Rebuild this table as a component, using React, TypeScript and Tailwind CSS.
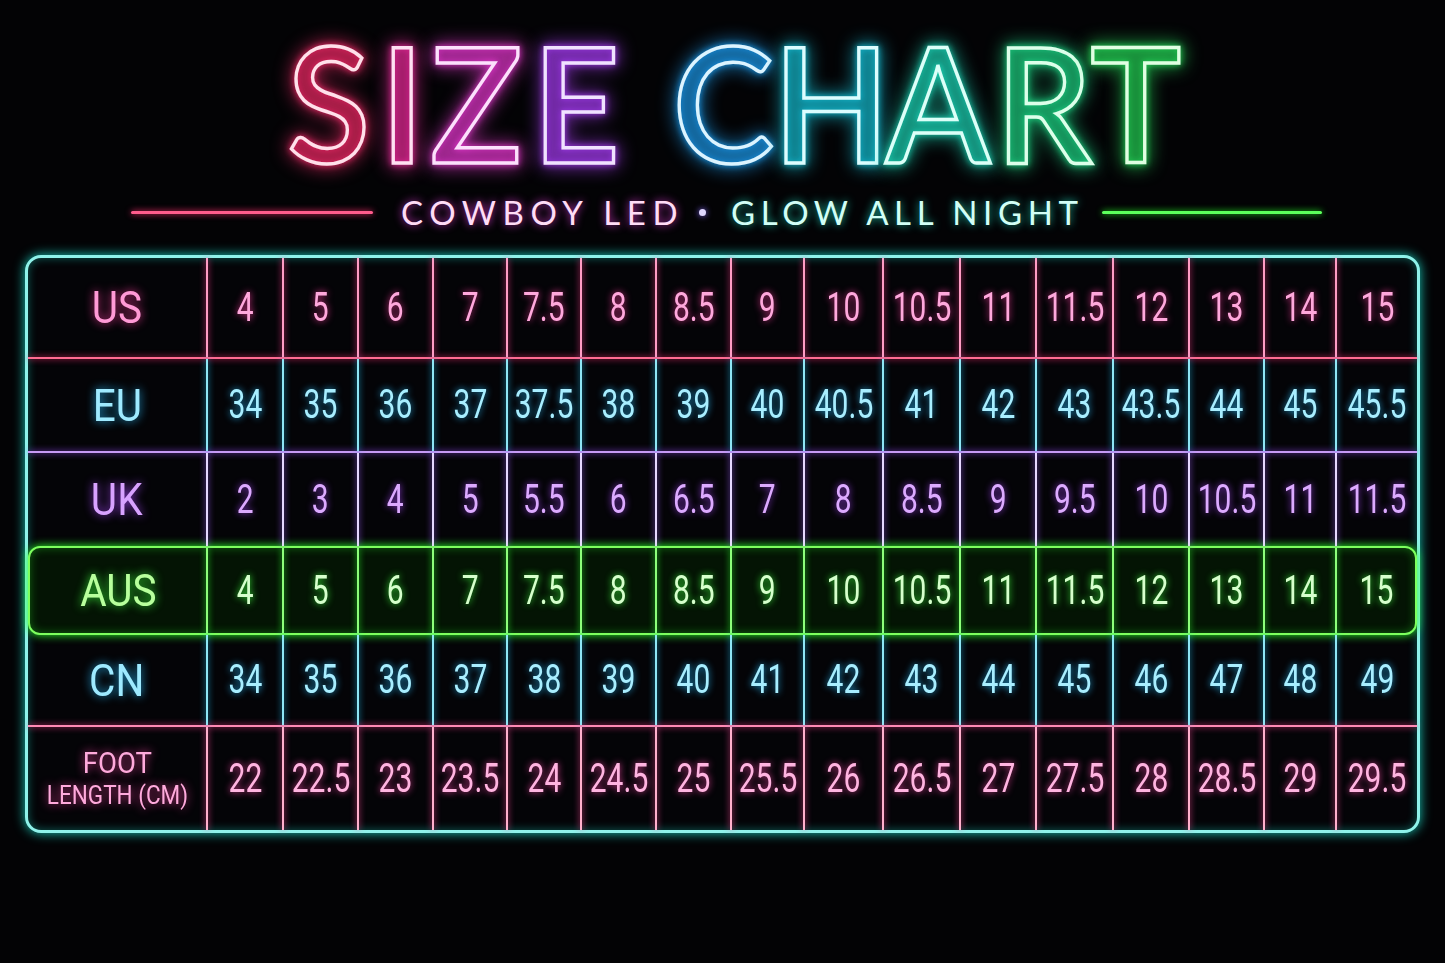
import React from "react";

const COLS = [
  "w-[74px]", "w-[73px]", "w-[73px]", "w-[72px]", "w-[72px]", "w-[73px]", "w-[73px]", "w-[71px]",
  "w-[77px]", "w-[75px]", "w-[74px]", "w-[75px]", "w-[74px]", "w-[73px]", "w-[70px]", "w-[80px]",
];

type RowDef = {
  key: string;
  label: React.ReactNode;
  values: string[];
  text: string;
  labelText: string;
  divider: string;
  height: string;
};

const NUM_FONT = "font-['Roboto','Noto_Sans',sans-serif]";

const rows: RowDef[] = [
  {
    key: "us",
    label: "US",
    values: ["4", "5", "6", "7", "7.5", "8", "8.5", "9", "10", "10.5", "11", "11.5", "12", "13", "14", "15"],
    text: "text-[#ffa8dc] [text-shadow:0_0_8px_rgba(255,60,160,0.85)]",
    labelText: "text-[#ff9ad6] [text-shadow:0_0_10px_rgba(255,60,160,0.9)]",
    divider: "bg-[#ff9cc4] shadow-[0_0_6px_#ff3c8c]",
    height: "h-[99px]",
  },
  {
    key: "eu",
    label: "EU",
    values: ["34", "35", "36", "37", "37.5", "38", "39", "40", "40.5", "41", "42", "43", "43.5", "44", "45", "45.5"],
    text: "text-[#a8eeff] [text-shadow:0_0_8px_rgba(40,190,255,0.85)]",
    labelText: "text-[#9eeaff] [text-shadow:0_0_10px_rgba(40,190,255,0.9)]",
    divider: "bg-[#8ee6f5] shadow-[0_0_6px_#22b8e8]",
    height: "h-[92px]",
  },
  {
    key: "uk",
    label: "UK",
    values: ["2", "3", "4", "5", "5.5", "6", "6.5", "7", "8", "8.5", "9", "9.5", "10", "10.5", "11", "11.5"],
    text: "text-[#dcaaff] [text-shadow:0_0_8px_rgba(170,70,255,0.85)]",
    labelText: "text-[#d8a2ff] [text-shadow:0_0_10px_rgba(170,70,255,0.9)]",
    divider: "bg-[#e6d8ff] shadow-[0_0_6px_#a060ff]",
    height: "h-[93px]",
  },
  {
    key: "aus",
    label: "AUS",
    values: ["4", "5", "6", "7", "7.5", "8", "8.5", "9", "10", "10.5", "11", "11.5", "12", "13", "14", "15"],
    text: "text-[#d6ffcc] [text-shadow:0_0_8px_rgba(60,255,60,0.9)]",
    labelText: "text-[#b8ff9c] [text-shadow:0_0_10px_rgba(60,255,60,0.9)]",
    divider: "bg-[#8dff7a] shadow-[0_0_6px_#2cff2c]",
    height: "h-[85px]",
  },
  {
    key: "cn",
    label: "CN",
    values: ["34", "35", "36", "37", "38", "39", "40", "41", "42", "43", "44", "45", "46", "47", "48", "49"],
    text: "text-[#a8eeff] [text-shadow:0_0_8px_rgba(40,190,255,0.85)]",
    labelText: "text-[#9eeaff] [text-shadow:0_0_10px_rgba(40,190,255,0.9)]",
    divider: "bg-[#8ee6f5] shadow-[0_0_6px_#22b8e8]",
    height: "h-[90px]",
  },
  {
    key: "foot",
    label: (
      <div className="flex flex-col items-center leading-none">
        <span className="inline-block text-[29px] [transform:scaleX(0.95)]">FOOT</span>
        <span className="inline-block mt-[5px] text-[25px] whitespace-nowrap [transform:scaleX(0.9)]">LENGTH (CM)</span>
      </div>
    ),
    values: ["22", "22.5", "23", "23.5", "24", "24.5", "25", "25.5", "26", "26.5", "27", "27.5", "28", "28.5", "29", "29.5"],
    text: "text-[#ffb4e0] [text-shadow:0_0_8px_rgba(255,70,170,0.85)]",
    labelText: "text-[#ffaadc] [text-shadow:0_0_10px_rgba(255,70,170,0.9)]",
    divider: "bg-[#ffb0cc] shadow-[0_0_6px_#ff4c9c]",
    height: "h-[103px]",
  },
];

function Row({ r, inBox }: { r: RowDef; inBox?: boolean }) {
  return (
    <div className={`flex ${r.height} ${NUM_FONT}`}>
      <div
        className={`${inBox ? "w-[176px]" : "w-[178px]"} flex items-center justify-center ${r.labelText} leading-none`}
      >
        {r.key === "foot" ? (
          r.label
        ) : (
          <span className="inline-block text-[45px] [transform:scaleX(0.9)]">{r.label}</span>
        )}
      </div>
      {r.values.map((v, i) => (
        <React.Fragment key={i}>
          <div className={`w-[2px] self-stretch ${r.divider}`} />
          <div
            className={`${inBox && i === 15 ? "w-[78px]" : COLS[i]} flex items-center justify-center text-[40px] leading-none ${r.text}`}
          >
            <span className="inline-block whitespace-nowrap [transform:scaleX(0.75)]">{v}</span>
          </div>
        </React.Fragment>
      ))}
    </div>
  );
}

const LETTERS: { ch: string; box: string; cls: string }[] = [
  { ch: "S", box: "w-[82px]", cls: "text-[rgba(255,40,100,0.18)] [-webkit-text-stroke:3.5px_#ffe0ea] [filter:drop-shadow(0_0_3px_#ff2d6f)_drop-shadow(0_0_9px_#ff2d6f)]" },
  { ch: "I", box: "w-[21px] ml-[22px]", cls: "text-[rgba(255,40,160,0.18)] [-webkit-text-stroke:3.5px_#ffe0f2] [filter:drop-shadow(0_0_3px_#ff2fa8)_drop-shadow(0_0_9px_#ff2fa8)]" },
  { ch: "Z", box: "w-[84px] ml-[21px]", cls: "text-[rgba(240,50,210,0.18)] [-webkit-text-stroke:3.5px_#fce0fc] [filter:drop-shadow(0_0_3px_#f03cd8)_drop-shadow(0_0_9px_#f03cd8)]" },
  { ch: "E", box: "w-[73px] ml-[22px]", cls: "text-[rgba(170,60,255,0.18)] [-webkit-text-stroke:3.5px_#f0e2ff] [filter:drop-shadow(0_0_3px_#b040ff)_drop-shadow(0_0_9px_#b040ff)]" },
  { ch: "C", box: "w-[97px] ml-[62px]", cls: "text-[rgba(30,160,255,0.16)] [-webkit-text-stroke:3.5px_#dcf4ff] [filter:drop-shadow(0_0_3px_#1ea8ff)_drop-shadow(0_0_9px_#1ea8ff)]" },
  { ch: "H", box: "w-[89px] ml-[15px]", cls: "text-[rgba(20,210,230,0.16)] [-webkit-text-stroke:3.5px_#dcfdff] [filter:drop-shadow(0_0_3px_#18d0e8)_drop-shadow(0_0_9px_#18d0e8)]" },
  { ch: "A", box: "w-[100px] ml-[12px]", cls: "text-[rgba(30,230,200,0.16)] [-webkit-text-stroke:3.5px_#dcfff8] [filter:drop-shadow(0_0_3px_#1ee6c4)_drop-shadow(0_0_9px_#1ee6c4)]" },
  { ch: "R", box: "w-[88px] ml-[12px]", cls: "text-[rgba(30,230,140,0.16)] [-webkit-text-stroke:3.5px_#dcffea] [filter:drop-shadow(0_0_3px_#20e890)_drop-shadow(0_0_9px_#20e890)]" },
  { ch: "T", box: "w-[83px] ml-[6px]", cls: "text-[rgba(40,230,90,0.16)] [-webkit-text-stroke:3.5px_#e0ffe2] [filter:drop-shadow(0_0_3px_#28e860)_drop-shadow(0_0_9px_#28e860)]" },
];

export default function App() {
  return (
    <div className="min-h-[963px] w-full bg-[#030305] overflow-hidden">
      {/* Title */}
      <div className="h-[185px] pt-[21px] pl-[288px] flex items-start">
        {LETTERS.map((l, i) => (
          <span
            key={i}
            className={`${l.box} flex justify-center h-[160px] text-[160px] leading-none font-semibold font-['Lato',sans-serif] ${l.cls}`}
          >
            <span className="inline-block [transform:scaleX(0.95)]">{l.ch}</span>
          </span>
        ))}
      </div>

      {/* Subtitle */}
      <div className="h-[55px] flex items-center pl-[131px] font-['Lato',sans-serif] text-[33px] leading-none">
        <div className="w-[242px] h-[3px] rounded-full bg-[#ff5c8c] shadow-[0_0_6px_#ff2d6f]" />
        <span className="ml-[28px] w-[276px] whitespace-nowrap tracking-[0.2em] text-[#ffdcf6] [text-shadow:0_0_8px_rgba(230,60,220,0.9)]">
          COWBOY LED
        </span>
        <span className="ml-[20px] w-[10px] h-[8px] flex items-center justify-center">
          <span className="block w-[7px] h-[7px] rounded-full bg-[#e0d8ff] shadow-[0_0_6px_#8a6cff]" />
        </span>
        <span className="ml-[24px] w-[347px] whitespace-nowrap tracking-[0.17em] text-[#d2fff6] [text-shadow:0_0_8px_rgba(30,220,190,0.9)]">
          GLOW ALL NIGHT
        </span>
        <div className="ml-[24px] w-[220px] h-[3px] rounded-full bg-[#5cff5c] shadow-[0_0_6px_#22e822]" />
      </div>

      {/* Table */}
      <div className="ml-[25px] mt-[15px] w-[1395px] rounded-[16px] border-[3px] border-[#8ff2ea] shadow-[0_0_12px_#19c8b8,inset_0_0_10px_rgba(25,200,184,0.45)] bg-[#040407]">
        <Row r={rows[0]} />
        <div className="h-[2px] bg-[#ff6b92] shadow-[0_0_6px_#ff2d6f]" />
        <Row r={rows[1]} />
        <div className="h-[2px] bg-[#c79af5] shadow-[0_0_6px_#9b4dff]" />
        <Row r={rows[2]} />
        <div className="h-[89px] rounded-[12px] border-2 border-[#7dff5e] bg-[#041404] shadow-[0_0_10px_#2cff2c,inset_0_0_10px_rgba(44,255,44,0.35)]">
          <Row r={rows[3]} inBox />
        </div>
        <Row r={rows[4]} />
        <div className="h-[2px] bg-[#ff8ab4] shadow-[0_0_6px_#ff3c8c]" />
        <Row r={rows[5]} />
      </div>
    </div>
  );
}
